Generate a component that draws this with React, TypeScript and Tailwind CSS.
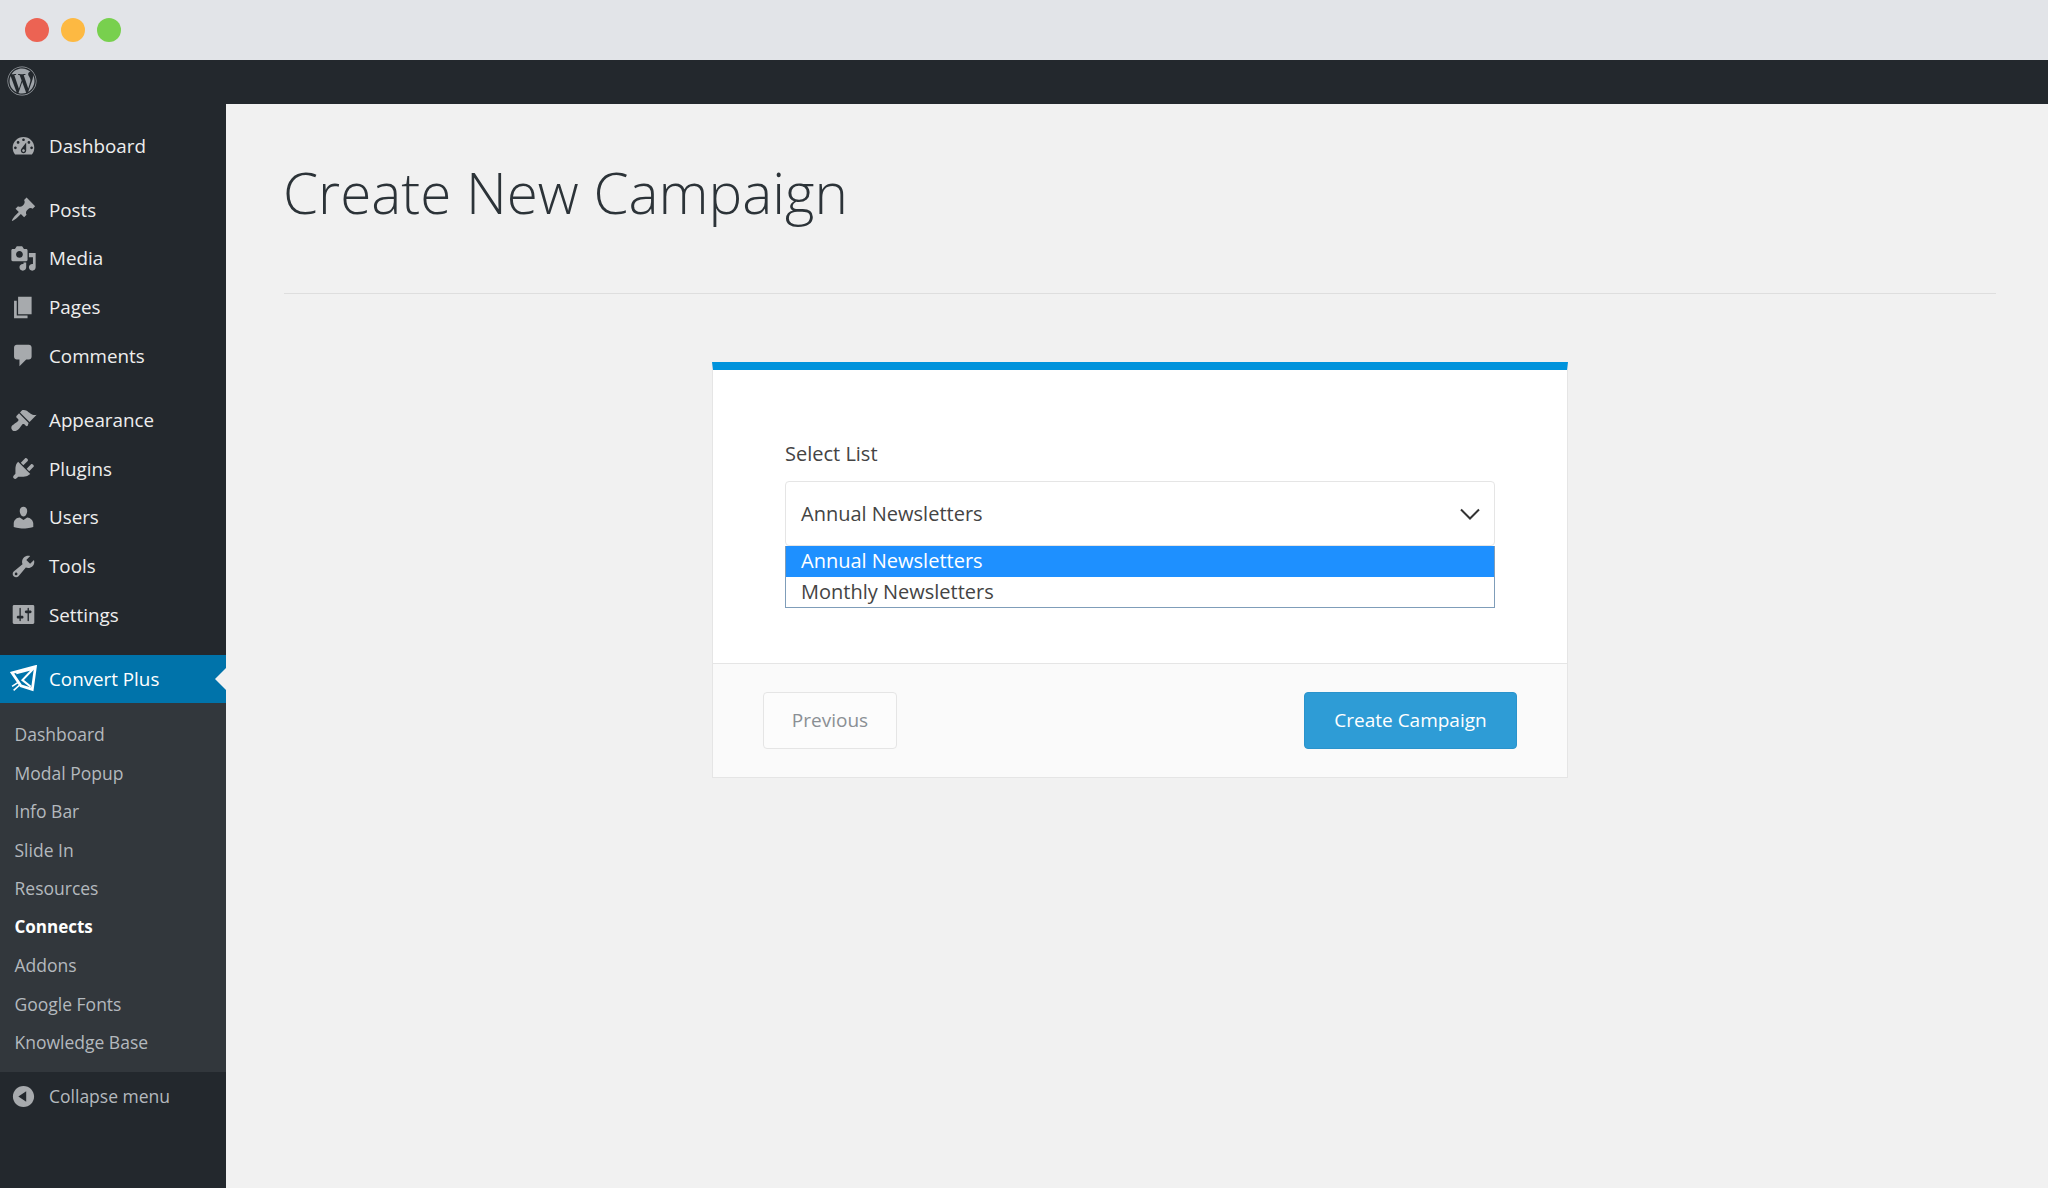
import React from "react";
import { FaWordpress } from "react-icons/fa";

const paths: Record<string, string> = {
  dashboard: "M3.76 16h12.48c1.1-1.37 1.76-3.11 1.76-5 0-4.42-3.58-8-8-8s-8 3.58-8 8c0 1.89.66 3.63 1.76 5zM10 4c.55 0 1 .45 1 1s-.45 1-1 1-1-.45-1-1 .45-1 1-1zM6 6c.55 0 1 .45 1 1s-.45 1-1 1-1-.45-1-1 .45-1 1-1zm8 0c.55 0 1 .45 1 1s-.45 1-1 1-1-.45-1-1 .45-1 1-1zm-5.37 5.55L12 7v6c0 1.1-.9 2-2 2s-2-.9-2-2c0-.57.24-1.08.63-1.45zM4 10c.55 0 1 .45 1 1s-.45 1-1 1-1-.45-1-1 .45-1 1-1zm12 0c.55 0 1 .45 1 1s-.45 1-1 1-1-.45-1-1 .45-1 1-1zm-5 3c0-.55-.45-1-1-1s-1 .45-1 1 .45 1 1 1 1-.45 1-1z",
  posts: "M10.44 3.02l1.82-1.82 6.36 6.35-1.83 1.82c-1.05-.68-2.48-.57-3.41.36l-.75.75c-.92.93-1.04 2.35-.35 3.41l-1.83 1.82-2.41-2.41-2.8 2.79c-.42.42-3.38 2.71-3.8 2.29s1.86-3.39 2.28-3.81l2.79-2.79L4.1 9.36l1.83-1.82c1.05.69 2.48.57 3.4-.36l.75-.75c.93-.92 1.05-2.35.36-3.41z",
  media: "M13 11V4c0-.55-.45-1-1-1h-1.67L9 1H5L3.67 3H2c-.55 0-1 .45-1 1v7c0 .55.45 1 1 1h10c.55 0 1-.45 1-1zM7 4.5c1.38 0 2.5 1.12 2.5 2.5S8.38 9.5 7 9.5 4.5 8.38 4.5 7 5.62 4.5 7 4.5zM14 6h5v10.5c0 1.38-1.12 2.5-2.5 2.5S14 17.88 14 16.5s1.12-2.5 2.5-2.5c.17 0 .34.02.5.05V9h-3V6zm-4 8.05V13h2v3.5c0 1.38-1.12 2.5-2.5 2.5S7 17.88 7 16.5 8.12 14 9.5 14c.17 0 .34.02.5.05z",
  pages: "M6 15V2h10v13H6zm-1 1h8v2H3V5h2v11z",
  comments: "M5 2h9c1.1 0 2 .9 2 2v7c0 1.1-.9 2-2 2h-2l-5 5v-5H5c-1.1 0-2-.9-2-2V4c0-1.1.9-2 2-2z",
  appearance: "M14.48 11.06L7.41 3.99l1.5-1.5c.5-.56 2.3-.47 3.51.32 1.21.8 1.43 1.28 2.91 2.1 1.18.64 2.45 1.26 4.45.85zm-.71.71L6.7 4.7 4.93 6.47c-.39.39-.39 1.02 0 1.41l1.06 1.06c.39.39.39 1.03 0 1.42-.6.6-1.43 1.11-2.21 1.69-.35.26-.7.53-1.01.84C1.43 13.23.4 14.85 1.4 16.7c1.02 1.88 3.47 1.21 5.29-.61.31-.31.58-.66.84-1.01.58-.78 1.09-1.61 1.69-2.21.39-.39 1.03-.39 1.42 0l1.06 1.06c.39.39 1.02.39 1.41 0z",
  plugins: "M13.11 4.36L9.87 7.6 8 5.73l3.24-3.24c.35-.34 1.05-.2 1.56.32.52.51.66 1.21.31 1.55zm-8 1.77l.91-1.12 9.01 9.01-1.19.84c-.71.71-2.63 1.16-3.82 1.16H6.14L4.9 17.26c-.59.59-1.54.59-2.12 0-.59-.58-.59-1.53 0-2.12l1.24-1.24v-3.88c0-1.13.4-3.19 1.09-3.89zm7.26 3.97l3.24-3.24c.34-.35 1.04-.21 1.55.31.52.51.66 1.21.31 1.55l-3.24 3.25z",
  users: "M10 9.25c-2.27 0-2.73-3.44-2.73-3.44C7 4.02 7.82 2 9.97 2c2.16 0 2.98 2.02 2.71 3.81 0 0-.41 3.44-2.68 3.44zm0 2.57L12.72 10c2.39 0 4.52 2.33 4.52 4.53v2.49s-3.65 1.13-7.24 1.13c-3.65 0-7.24-1.13-7.24-1.13v-2.49c0-2.25 1.94-4.48 4.47-4.48z",
  tools: "M16.68 9.77c-1.34 1.34-3.3 1.67-4.95.99l-5.41 6.52c-.99.99-2.59.99-3.58 0s-.99-2.59 0-3.57l6.52-5.42c-.68-1.65-.35-3.61.99-4.95 1.28-1.28 3.12-1.62 4.72-1.06l-2.89 2.89 2.82 2.82 2.86-2.87c.53 1.58.18 3.39-1.08 4.65zM3.81 16.21c.4.39 1.04.39 1.43 0 .4-.4.4-1.04 0-1.43-.39-.4-1.03-.4-1.43 0-.39.39-.39 1.03 0 1.43z",
  settings: "M18 16V4c0-.55-.45-1-1-1H3c-.55 0-1 .45-1 1v12c0 .55.45 1 1 1h14c.55 0 1-.45 1-1zM8 11h1c.55 0 1 .45 1 1s-.45 1-1 1H8v1.5c0 .28-.22.5-.5.5s-.5-.22-.5-.5V13H6c-.55 0-1-.45-1-1s.45-1 1-1h1V5.5c0-.28.22-.5.5-.5s.5.22.5.5V11zm5-2h-1c-.55 0-1-.45-1-1s.45-1 1-1h1V5.5c0-.28.22-.5.5-.5s.5.22.5.5V7h1c.55 0 1 .45 1 1s-.45 1-1 1h-1v5.5c0 .28-.22.5-.5.5s-.5-.22-.5-.5V9z",
  collapse: "M10 2.16c4.33 0 7.84 3.51 7.84 7.84s-3.51 7.84-7.84 7.84S2.16 14.33 2.16 10 5.71 2.16 10 2.16zm2 11.72V6.12L6.18 9.97z",
};

function Dash({ name }: { name: string }) {
  return (
    <svg viewBox="0 0 20 20" className="w-[27px] h-[27px] ml-[10px] mr-[12px] shrink-0" fill="#a7aaad">
      <path d={paths[name]} />
    </svg>
  );
}

function Item({ icon, label }: { icon: string; label: string }) {
  return (
    <div className="flex items-center h-[48.6px] text-[18.8px] text-[#eeeeee]">
      <Dash name={icon} />
      <span>{label}</span>
    </div>
  );
}

function Group({ items, className }: { items: [string, string][]; className?: string }) {
  return (
    <div className={className}>
      {items.map(([i, l]) => (
        <Item key={l} icon={i} label={l} />
      ))}
    </div>
  );
}

const sub = ["Dashboard", "Modal Popup", "Info Bar", "Slide In", "Resources", "Connects", "Addons", "Google Fonts", "Knowledge Base"];

export default function App() {
  return (
    <div className="h-[1188px] w-[2048px] flex flex-col overflow-hidden bg-[#f1f1f1] font-['Open_Sans',sans-serif]">
      <div className="h-[60px] shrink-0 bg-[#e2e4e8] flex items-center pl-[25px] gap-[12px]">
        <span className="w-[24px] h-[24px] rounded-full bg-[#ec6353]" />
        <span className="w-[24px] h-[24px] rounded-full bg-[#fdb942]" />
        <span className="w-[24px] h-[24px] rounded-full bg-[#78d04e]" />
      </div>
      <div className="h-[44px] shrink-0 bg-[#23282d] pt-[6px] pl-[7px]">
        <FaWordpress className="w-[30px] h-[30px] text-[#a0a5aa]" />
      </div>
      <div className="flex-1 flex min-h-0">
        <aside className="w-[226px] shrink-0 bg-[#23282d] flex flex-col pt-[18px]">
          <Group items={[["dashboard", "Dashboard"]]} />
          <Group
            className="mt-[15px]"
            items={[["posts", "Posts"], ["media", "Media"], ["pages", "Pages"], ["comments", "Comments"]]}
          />
          <Group
            className="mt-[16px]"
            items={[["appearance", "Appearance"], ["plugins", "Plugins"], ["users", "Users"], ["tools", "Tools"], ["settings", "Settings"]]}
          />
          <div className="mt-[16px] relative flex items-center h-[48px] bg-[#0073aa] text-white text-[18.8px]">
            <svg viewBox="0 0 26 26" className="w-[27px] h-[27px] ml-[10px] mr-[12px] shrink-0" fill="none" stroke="#ffffff" strokeWidth="2.6" strokeLinejoin="miter">
              <path d="M2 7.5 24.5 1.5 21.5 23.5 10.5 20Z" />
              <path d="M6 8 22.5 3.5 12 14.5 20 21" strokeWidth="2" />
              <path d="M7.5 17 2 20.5M9 19.5 3.5 24.5" strokeWidth="1.5" />
            </svg>
            <span>Convert Plus</span>
            <span className="absolute right-0 top-1/2 -translate-y-1/2 w-0 h-0 border-y-[11px] border-y-transparent border-r-[11px] border-r-[#f1f1f1]" />
          </div>
          <div className="bg-[#32373c] pt-[12px] pb-[10.5px]">
            {sub.map((s) => (
              <div
                key={s}
                className={
                  s === "Connects"
                    ? "h-[38.5px] flex items-center pl-[14.5px] text-[17px] font-bold text-white"
                    : "h-[38.5px] flex items-center pl-[14.5px] text-[17.5px] text-[#b4b9be]"
                }
              >
                {s}
              </div>
            ))}
          </div>
          <div className="flex items-center h-[49px] text-[17.5px] text-[#b4b9be]">
            <Dash name="collapse" />
            <span>Collapse menu</span>
          </div>
        </aside>
        <main className="flex-1 pl-[58px] pr-[52px]">
          <h1 className="h-[190px] pt-[48px] border-b border-[#dedede] text-[56.6px] leading-[82px] font-light text-[#2c3338] indent-[-1px]">
            Create New Campaign
          </h1>
          <div className="mt-[68px] w-[856px] ml-[428px] bg-white border-x border-b border-[#e5e5e5] border-t-[8px] border-t-[#0093dc]">
            <div className="h-[293px] pt-[70px] px-[72px]">
              <div className="text-[20px] leading-[28px] text-[#444444]">Select List</div>
              <div className="mt-[13px] h-[65px] border border-[#e5e5e5] rounded-[4px] flex items-center justify-between pl-[15px] pr-[14px] text-[20px] text-[#444444]">
                <span>Annual Newsletters</span>
                <svg viewBox="0 0 20 12" className="w-[20px] h-[12px]" fill="none" stroke="#333333" strokeWidth="2">
                  <path d="M1 1.5 10 10.5 19 1.5" />
                </svg>
              </div>
              <div className="border border-[#7f9db9] border-t-0 text-[20px] leading-[30px] text-[#444444]">
                <div className="bg-[#1e90ff] text-white pl-[15px] h-[30.5px]">Annual Newsletters</div>
                <div className="pl-[15px] h-[30.5px]">Monthly Newsletters</div>
              </div>
            </div>
            <div className="h-[114px] bg-[#fafafa] border-t border-[#e5e5e5] flex items-center justify-between pl-[50px] pr-[50px]">
              <button className="w-[134px] h-[57px] bg-[#fcfcfc] border border-[#e5e5e5] rounded-[4px] text-[19px] text-[#8a8f94]">
                Previous
              </button>
              <button className="w-[213px] h-[57px] bg-[#2e9cd6] border border-[#2a93cc] rounded-[4px] text-[19px] text-white">
                Create Campaign
              </button>
            </div>
          </div>
        </main>
      </div>
    </div>
  );
}
